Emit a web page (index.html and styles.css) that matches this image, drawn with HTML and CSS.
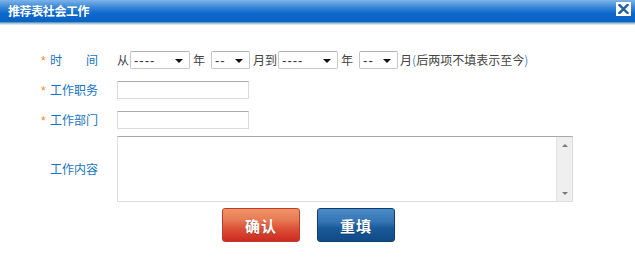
FILE: index.html
```html
<!DOCTYPE html>
<html lang="zh">
<head>
<meta charset="utf-8">
<title>推荐表社会工作</title>
<link rel="stylesheet" href="styles.css">
</head>
<body>
<div class="dialog">
  <div class="titlebar">
    <span class="title">推荐表社会工作</span>
    <span class="close">
      <svg width="11" height="10" viewBox="0 0 11 10"><path d="M1.5 1 L9.5 9 M9.5 1 L1.5 9" stroke="#1a5fa8" stroke-width="2.4" stroke-linecap="square"/></svg>
    </span>
  </div>
  <div class="titleline"></div>
  <form class="form">
    <div class="row">
      <div class="label"><span class="star">*</span><span class="ltext just">时间</span></div>
      <div class="field">
        <span class="txt">从</span>
        <span class="sel w60"><select><option>----</option></select></span>
        <span class="txt gap3">年</span>
        <span class="sel w39 ml6"><select><option>--</option></select></span>
        <span class="txt gap3">月到</span>
        <span class="sel w60 ml2"><select><option>----</option></select></span>
        <span class="txt gap3">年</span>
        <span class="sel w39 ml6"><select><option>--</option></select></span>
        <span class="txt gap2">月<span class="paren">(</span>后两项不填表示至今<span class="paren">)</span></span>
      </div>
    </div>
    <div class="row">
      <div class="label"><span class="star">*</span><span class="ltext">工作职务</span></div>
      <div class="field"><input class="inp" type="text"></div>
    </div>
    <div class="row">
      <div class="label"><span class="star">*</span><span class="ltext">工作部门</span></div>
      <div class="field"><input class="inp" type="text"></div>
    </div>
    <div class="row area-row">
      <div class="label"><span class="star empty"></span><span class="ltext">工作内容</span></div>
      <div class="field">
        <div class="tbox">
          <textarea class="ta"></textarea>
          <div class="sbar">
            <span class="arr up"></span>
            <span class="arr down"></span>
          </div>
        </div>
      </div>
    </div>
    <div class="buttons">
      <button type="button" class="btn red">确认</button>
      <button type="button" class="btn blue">重填</button>
    </div>
  </form>
</div>
</body>
</html>
```
FILE: styles.css
```css
html, body {
  margin: 0;
  padding: 0;
  background: #fff;
}
body {
  font-family: "Liberation Sans", "Noto Sans CJK SC", sans-serif;
  font-size: 12px;
  color: #444;
}
.dialog {
  width: 635px;
  height: 267px;
  overflow: hidden;
}
.titlebar {
  height: 22px;
  background: linear-gradient(#7db4e8 0%, #3f8ad9 30%, #0d68cc 60%, #0a62c2 100%);
  display: flex;
  align-items: center;
  justify-content: space-between;
  padding: 0 4px 0 8px;
}
.title {
  color: #fff;
  font-weight: bold;
  font-size: 12px;
  font-family: "Noto Sans CJK SC", sans-serif;
  letter-spacing: -0.4px;
  line-height: 22px;
}
.close {
  width: 15px;
  height: 14px;
  background: #fff;
  display: flex;
  align-items: center;
  justify-content: center;
  margin-top: -4px;
}
.titleline {
  height: 1px;
  background: #5e9fc4;
  border-bottom: 1px solid #a9c4d8;
  box-shadow: 0 1px 0 #dae6f0;
}
.form {
  margin: 0;
  padding-top: 21px;
}
.row {
  display: flex;
  align-items: center;
  height: 30px;
}
.label {
  width: 77px;
  padding-left: 40px;
  display: flex;
  align-items: center;
  flex: none;
}
.star {
  width: 10px;
  color: #f08a1c;
  font-size: 12px;
  line-height: 12px;
  height: 12px;
  padding-left: 1px;
  margin-top: 2px;
  box-sizing: border-box;
}
.ltext {
  color: #1473c9;
  font-family: "Noto Sans CJK SC", sans-serif;
  font-size: 12px;
  width: 48px;
  line-height: 16px;
}
.just {
  text-align: justify;
  text-align-last: justify;
}
.field {
  display: flex;
  align-items: center;
  font-family: "Noto Sans CJK SC", sans-serif;
}
.txt {
  color: #444;
  line-height: 16px;
}
.gap3 { margin-left: 3px; }
.gap2 { margin-left: 2px; }
.ml6 { margin-left: 6px; }
.ml2 { margin-left: 2px; }
.paren { color: #4d86d6; }
.sel {
  position: relative;
  display: inline-block;
  height: 18px;
  box-sizing: border-box;
}
.sel.w60 { width: 60px; margin-left: 1px; }
.sel.w39 { width: 39px; }
.sel select {
  appearance: none;
  -webkit-appearance: none;
  width: 100%;
  height: 18px;
  box-sizing: border-box;
  border: 1px solid #c6c6c6;
  border-top-color: #b0b0b0;
  border-radius: 2px;
  background: #fff;
  font-family: "Liberation Sans", sans-serif;
  font-size: 13px;
  letter-spacing: 1px;
  color: #333;
  padding: 0 0 0 3px;
  margin: 0;
  outline: none;
  display: block;
}
.sel::after {
  content: "";
  position: absolute;
  right: 7px;
  top: 8px;
  border-left: 4px solid transparent;
  border-right: 4px solid transparent;
  border-top: 4px solid #111;
  pointer-events: none;
}
.inp {
  width: 132px;
  height: 18px;
  box-sizing: border-box;
  border: 1px solid #dadada;
  border-top-color: #ababab;
  border-radius: 1px;
  padding: 0 3px;
  margin: 0;
  font-size: 12px;
  outline: none;
}
.area-row {
  height: auto;
  margin-top: 1px;
}
.tbox {
  width: 456px;
  height: 66px;
  box-sizing: border-box;
  border: 1px solid #dedede;
  border-top-color: #a8a8a8;
  display: flex;
}
.ta {
  flex: 1;
  border: 0;
  margin: 0;
  padding: 2px;
  resize: none;
  outline: none;
  overflow: hidden;
  font-size: 12px;
}
.sbar {
  width: 16px;
  background: #efefef;
  border-left: 1px solid #e4e4e4;
  display: flex;
  flex-direction: column;
  justify-content: space-between;
  align-items: center;
  padding: 7px 0 6px;
  box-sizing: border-box;
}
.arr {
  width: 0;
  height: 0;
  border-left: 3px solid transparent;
  border-right: 3px solid transparent;
}
.arr.up { border-bottom: 3px solid #7a7a7a; }
.arr.down { border-top: 3px solid #7a7a7a; }
.buttons {
  display: flex;
  gap: 17px;
  padding-left: 222px;
  margin-top: 6px;
}
.btn {
  width: 78px;
  height: 34px;
  border-radius: 3px;
  color: #fff;
  font-family: "Noto Sans CJK SC", sans-serif;
  font-weight: bold;
  font-size: 15px;
  letter-spacing: 1px;
  padding: 0;
  margin: 0;
  cursor: pointer;
  text-shadow: 0 1px 1px rgba(0,0,0,0.25);
}
.btn.red {
  border: 1px solid #c23a2c;
  background: linear-gradient(#f09566 0%, #e77a55 35%, #dd5238 60%, #cc2a20 100%);
}
.btn.blue {
  border: 1px solid #0d3e70;
  background: linear-gradient(#4a8bc8 0%, #3474b4 40%, #195a98 60%, #104a86 100%);
}
```
